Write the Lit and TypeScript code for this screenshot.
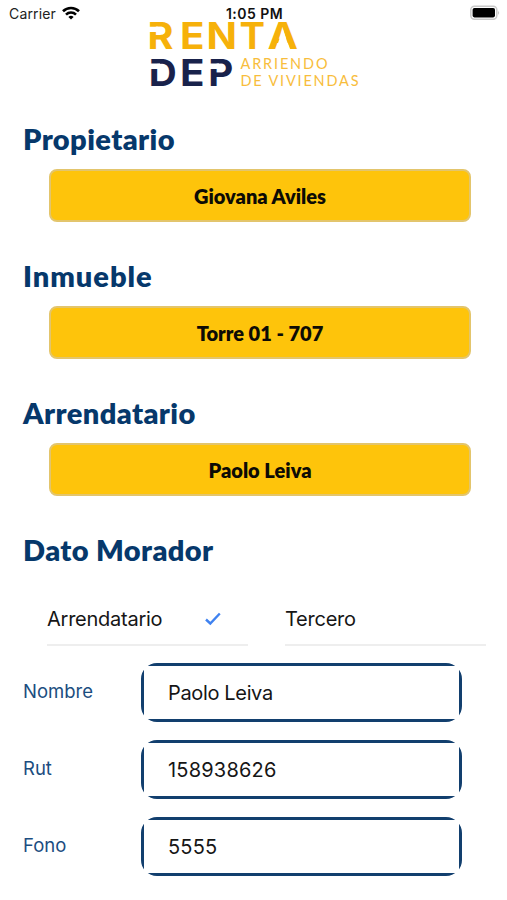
import { LitElement, html, svg, css } from "lit";
import { customElement, property } from "lit/decorators.js";

@customElement("status-bar")
class StatusBar extends LitElement {
  static styles = css`
    :host { display: grid; grid-template-columns: 1fr auto 1fr; align-items: center; height: 28px; padding: 0 7px 0 9px; box-sizing: border-box; font: 400 14px/16px Inter, sans-serif; color: #222; }
    .left { display: flex; align-items: center; gap: 6px; }
    .left svg { margin-top: -2px; }
    .carrier { letter-spacing: 0.15px; }
    .time { font-weight: 600; font-size: 14px; letter-spacing: 0.45px; color: #111; }
    .battery { justify-self: end; margin-top: -2px; }
    svg { display: block; }
  `;
  render() {
    return html`
      <div class="left">
        <span class="carrier">Carrier</span>
        <svg width="18" height="14" viewBox="0 0 18 14" fill="none" stroke="#000" stroke-width="2.6">
          <path d="M1 5.3a11.4 11.4 0 0 1 16 0M4 8.6a7.1 7.1 0 0 1 10 0" />
          <path d="M9 13.6 6.4 11a3.7 3.7 0 0 1 5.2 0z" fill="#000" stroke="none" />
        </svg>
      </div>
      <span class="time">1:05 PM</span>
      <svg class="battery" width="30" height="16" viewBox="0 0 30 16">
        <rect x="0.8" y="1.2" width="26" height="13" rx="3.6" fill="#fff" stroke="#c9c9c9" stroke-width="1.5" />
        <rect x="2.6" y="3" width="22.4" height="9.4" rx="1.8" fill="#000" />
        <path d="M28.2 5.5q1.8 2.2 0 4.6z" fill="#bbb" />
      </svg>
    `;
  }
}

type Letter = [char: string, x: number, width: number, baseline: number];

@customElement("brand-logo")
class BrandLogo extends LitElement {
  static styles = css`
    :host { display: flex; justify-content: center; }
    svg { display: block; overflow: visible; }
    .big { font: 700 37px Inter, sans-serif; }
    .gold { fill: #f6b10a; }
    .navy { fill: #19224b; }
    .cut { fill: #fff; }
    .small { font: 400 14.5px Lato, sans-serif; fill: #f8bd3c; }
  `;
  private letter([char, x, width, baseline]: Letter) {
    return svg`<text x=${x} y=${baseline} textLength=${width} lengthAdjust="spacingAndGlyphs">${char}</text>`;
  }
  render() {
    const top: Letter[] = [["R", -0.6, 26, 29], ["E", 32, 24.5, 29], ["N", 58.5, 30.5, 29], ["T", 91.5, 25.5, 29], ["A", 119.5, 30.5, 29]];
    const bottom: Letter[] = [["D", 0.8, 28, 65.7], ["E", 32, 24.5, 65.7], ["P", 60.3, 25, 65.7]];
    return html`
      <svg width="212" height="70" viewBox="0 0 212 70">
        <g class="big gold">${top.map((l) => this.letter(l))}</g>
        <g class="big navy">${bottom.map((l) => this.letter(l))}</g>
        <g class="cut">
          <path d="M0 6.7h10v5.3H0zM1 43.4h11v5.6H1zM60 43.4h11v5.6h-11z" />
          <path d="M134.8 9 141.8 29.5h-14z" />
        </g>
        <text class="small" x="92.5" y="48.7" textLength="87">ARRIENDO</text>
        <text class="small" x="92.5" y="65.6" textLength="118">DE VIVIENDAS</text>
      </svg>
    `;
  }
}

@customElement("picker-section")
class PickerSection extends LitElement {
  @property() heading = "";
  @property() value = "";
  static styles = css`
    :host { display: block; height: 137px; }
    h2 { margin: 0 0 13px 23px; font: 800 29px/35px Lato, sans-serif; letter-spacing: 0.4px; color: #06386b; }
    :host([wide]) h2 { letter-spacing: 0.95px; }
    button { display: block; width: 422px; height: 53px; margin: 0 0 0 49px; padding: 0; border: 2px solid #e3c56c; border-radius: 8px; background: #fec40b; color: #0d0b05; font: 800 20px/24px Lato, sans-serif; }
  `;
  render() {
    return html`<h2>${this.heading}</h2>
      ${this.value ? html`<button>${this.value}</button>` : ""}`;
  }
}

@customElement("form-field")
class FormField extends LitElement {
  @property() label = "";
  @property() value = "";
  static styles = css`
    :host { display: flex; align-items: center; }
    .label { width: 118px; margin-left: 23px; padding-bottom: 4px; font: 400 18.5px/24px Inter, sans-serif; color: #1b4d80; }
    .frame { width: 321px; height: 59px; box-sizing: border-box; border: 3px solid #123f6e; border-radius: 16px; }
    .value { height: 53px; box-sizing: border-box; padding: 1px 0 0 24px; background: #fff; font: 400 20px/53px Inter, sans-serif; letter-spacing: -0.35px; color: #161616; }
    :host([numeric]) .value { letter-spacing: 0.2px; }
  `;
  render() {
    return html`<span class="label">${this.label}</span>
      <div class="frame"><div class="value">${this.value}</div></div>`;
  }
}

@customElement("app-root")
class AppRoot extends LitElement {
  static styles = css`
    :host { display: block; width: 507px; height: 900px; overflow: hidden; background: #fff; }
    brand-logo { margin-top: -8px; }
    .sections { display: block; padding-top: 31px; }
    .options { display: flex; gap: 37px; margin: -76px 0 0 47px; }
    .option { display: flex; align-items: center; width: 201px; height: 53px; padding-top: 1px; box-sizing: border-box; border-bottom: 2px solid #eeeeee; font: 400 20px/24px Inter, sans-serif; letter-spacing: -0.25px; color: #161616; }
    .option svg { margin-left: auto; margin-right: 27px; }
    .fields { display: flex; flex-direction: column; gap: 18px; margin-top: 17px; }
  `;
  render() {
    return html`
      <status-bar></status-bar>
      <brand-logo></brand-logo>
      <div class="sections">
        <picker-section heading="Propietario" value="Giovana Aviles"></picker-section>
        <picker-section heading="Inmueble" value="Torre 01 - 707" wide></picker-section>
        <picker-section heading="Arrendatario" value="Paolo Leiva"></picker-section>
        <picker-section heading="Dato Morador"></picker-section>
      </div>
      <div class="options">
        <div class="option"><span>Arrendatario</span>
          <svg width="16" height="14" viewBox="0 0 16 14" fill="none" stroke="#3f82f0" stroke-width="2.4"><path d="M1 7.5 5.3 11.5 14.8 1.5" /></svg>
        </div>
        <div class="option"><span>Tercero</span></div>
      </div>
      <div class="fields">
        <form-field label="Nombre" value="Paolo Leiva"></form-field>
        <form-field label="Rut" value="158938626" numeric></form-field>
        <form-field label="Fono" value="5555" numeric></form-field>
      </div>
    `;
  }
}
